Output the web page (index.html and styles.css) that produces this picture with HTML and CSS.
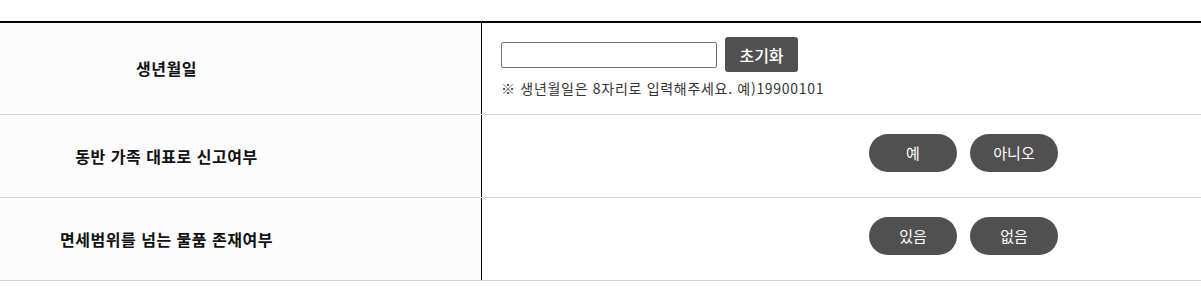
FILE: index.html
```html
<!DOCTYPE html>
<html lang="ko">
<head>
    <meta charset="UTF-8">
    <meta name="viewport" content="width=device-width, initial-scale=1.0">
    <title>여행자 휴대품 신고</title>
    <link rel="stylesheet" href="styles.css">
</head>
<body>
    <table class="declare-table">
        <tr class="row-birth">
            <th>생년월일</th>
            <td>
                <div class="birth-input">
                    <input type="text" id="birth" maxlength="8">
                    <button type="button" class="btn-reset">초기화</button>
                </div>
                <p class="note">※ 생년월일은 8자리로 입력해주세요. 예)19900101</p>
            </td>
        </tr>
        <tr class="row-choice">
            <th>동반 가족 대표로 신고여부</th>
            <td>
                <div class="choice">
                    <button type="button" class="btn-pill">예</button>
                    <button type="button" class="btn-pill">아니오</button>
                </div>
            </td>
        </tr>
        <tr class="row-choice last">
            <th>면세범위를 넘는 물품 존재여부</th>
            <td>
                <div class="choice">
                    <button type="button" class="btn-pill">있음</button>
                    <button type="button" class="btn-pill">없음</button>
                </div>
            </td>
        </tr>
    </table>
</body>
</html>
```

FILE: styles.css
```css
body {
    margin: 0;
    padding: 0;
    background: #fff;
    font-family: "Noto Sans CJK KR", "Noto Sans", sans-serif;
    color: #111;
}

.declare-table {
    width: 100%;
    margin-top: 21px;
    border-collapse: collapse;
    border-top: 2px solid #000;
}

.declare-table th {
    width: 333px;
    padding: 0 148px 0 0;
    background: #fcfcfc;
    border-right: 1px solid #000;
    border-bottom: 1px solid #d3d3d3;
    font-size: 16px;
    font-weight: 700;
    letter-spacing: 0.5px;
    text-align: center;
    vertical-align: middle;
}

.declare-table td {
    padding: 0 0 0 19px;
    border-bottom: 1px solid #d3d3d3;
    vertical-align: top;
}

.row-birth {
    height: 92px;
}

.row-birth td {
    padding-top: 14px;
}

.birth-input {
    display: flex;
    align-items: center;
    gap: 8px;
}

.birth-input input {
    width: 216px;
    height: 26px;
    box-sizing: border-box;
    border: 1px solid #767676;
    border-radius: 2px;
    padding: 0 4px;
    font-size: 13px;
}

.btn-reset {
    width: 73px;
    height: 35px;
    border: none;
    border-radius: 3px;
    background: #505050;
    color: #fff;
    font-family: inherit;
    font-size: 16px;
    font-weight: 500;
    cursor: pointer;
}

.note {
    margin: 6px 0 0;
    font-size: 14px;
    letter-spacing: 0.7px;
    color: #333;
    line-height: 20px;
}

.row-choice {
    height: 83px;
}

.row-choice td {
    padding-top: 19px;
}

.choice {
    display: flex;
    gap: 13px;
    margin-left: 368px;
}

.btn-pill {
    width: 88px;
    height: 38px;
    border: none;
    border-radius: 19px;
    background: #505050;
    color: #fff;
    font-family: inherit;
    font-size: 15px;
    cursor: pointer;
}
```
